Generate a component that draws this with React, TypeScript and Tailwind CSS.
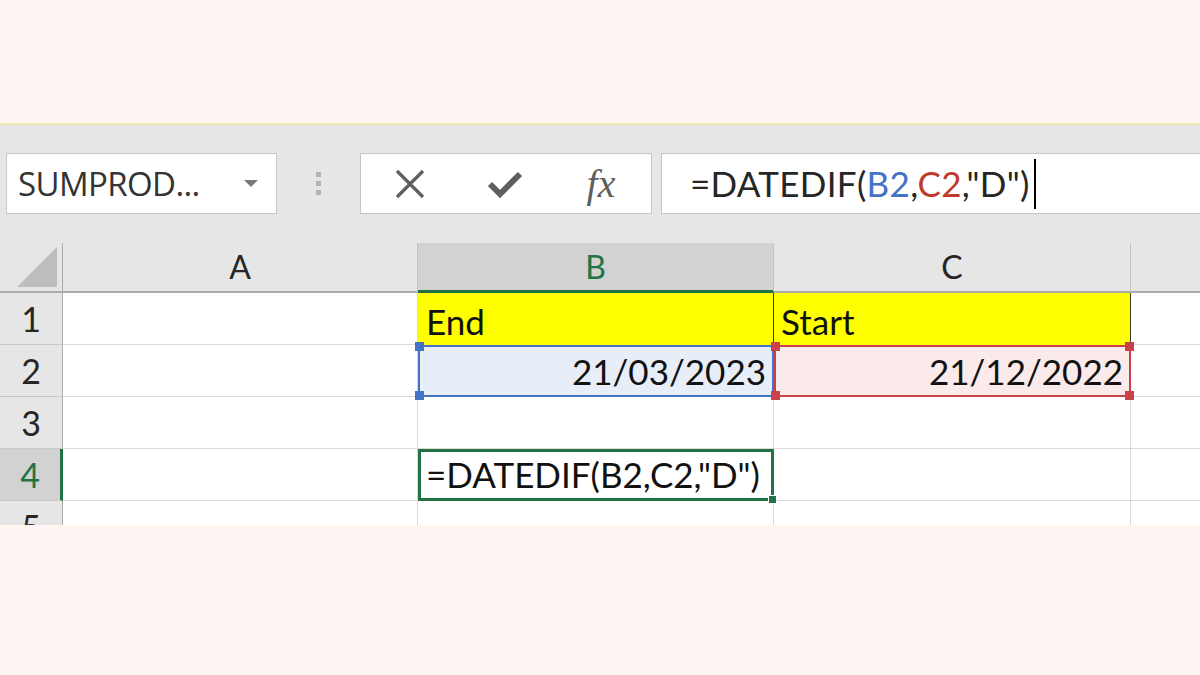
import React from "react"

const cellFont = { fontFamily: "Lato, 'Open Sans', sans-serif" }
const uiFont = { fontFamily: "'Open Sans', 'Noto Sans', sans-serif" }

function Handle({ pos, color }: { pos: string; color: string }) {
  return <div className={`absolute w-[9px] h-[9px] ${pos} ${color}`} />
}

function RowHead({ n, active }: { n: string; active?: boolean }) {
  return (
    <div
      className={`flex items-center justify-center border-b border-[#c9c9c9] text-[34px] ${
        active
          ? "bg-[#d2d2d2] text-[#217346] border-r-[3px] border-r-[#217346]"
          : "bg-[#e6e6e6] text-[#262626] border-r border-r-[#ababab]"
      }`}
    >
      <span className="leading-none">{n}</span>
    </div>
  )
}

export default function App() {
  return (
    <div className="w-[1200px] h-[675px] bg-[#fff5f2] flex flex-col overflow-hidden" style={cellFont}>
      <div className="h-[123px] shrink-0" />
      <div className="h-[2px] bg-[#ece9b4] shrink-0" />

      {/* excel */}
      <div className="h-[400px] shrink-0 bg-[#e6e6e6] flex flex-col overflow-hidden">
        {/* formula bar */}
        <div className="h-[118px] shrink-0 flex items-start pt-[28px] pl-[6px]">
          <div className="w-[271px] h-[61px] bg-white border border-[#c6c6c6] flex items-center pl-[11px] pr-[18px]">
            <span className="text-[33px] text-[#333] flex-1 tracking-[-0.6px] leading-none" style={uiFont}>
              SUMPROD...
            </span>
            <div className="w-0 h-0 border-l-[7px] border-r-[7px] border-t-[7px] border-l-transparent border-r-transparent border-t-[#7a7a7a]" />
          </div>
          <div className="w-[83px] h-[61px] flex flex-col items-center justify-center gap-[4px]">
            <div className="w-[5px] h-[5px] bg-[#b3b3b3]" />
            <div className="w-[5px] h-[5px] bg-[#b3b3b3]" />
            <div className="w-[5px] h-[5px] bg-[#b3b3b3]" />
          </div>
          <div className="w-[292px] h-[61px] bg-white border border-[#c6c6c6] flex items-center">
            <div className="w-[96px] flex justify-center pl-[2px]">
              <svg width="34" height="32" viewBox="0 0 34 32">
                <path d="M4 3 L30 29 M30 3 L4 29" stroke="#5f5f5f" strokeWidth="3.2" fill="none" />
              </svg>
            </div>
            <div className="w-[96px] flex justify-center">
              <svg width="36" height="30" viewBox="0 0 36 30">
                <path d="M3 15 L13 25 L33 5" stroke="#5f5f5f" strokeWidth="6" fill="none" strokeLinejoin="miter" />
              </svg>
            </div>
            <div className="w-[96px] flex justify-center">
              <span
                className="italic text-[40px] text-[#5f5f5f] leading-none"
                style={{ fontFamily: "'Liberation Serif', 'DejaVu Serif', serif" }}
              >
                fx
              </span>
            </div>
          </div>
          <div className="ml-[9px] flex-1 h-[61px] bg-white border border-[#c6c6c6] border-r-0 flex items-center pl-[28px]">
            <span className="text-[35px] text-[#262626] leading-none tracking-[0.3px]">
              =DATEDIF(<span className="text-[#4472c4]">B2</span>,<span className="text-[#c0392b]">C2</span>,"D")
            </span>
            <div className="w-[2px] h-[50px] bg-black ml-[4px]" />
          </div>
        </div>

        {/* grid */}
        <div className="grid grid-cols-[63px_355px_356px_357px_1fr] grid-rows-[50px_52px_52px_52px_52px_52px] bg-white">
          {/* header row */}
          <div className="bg-[#e6e6e6] border-r border-b-2 border-[#ababab] flex items-end justify-end pr-[5px] pb-[4px]">
            <svg width="40" height="40" viewBox="0 0 40 40">
              <polygon points="40,0 40,40 0,40" fill="#bdbdbd" />
            </svg>
          </div>
          <div className="bg-[#e6e6e6] border-r border-[#c4c4c4] border-b-2 border-b-[#ababab] flex items-center justify-center text-[32px] text-[#262626]">
            A
          </div>
          <div className="bg-[#d2d2d2] border-r border-[#c4c4c4] border-b-[3px] border-b-[#217346] flex items-center justify-center text-[32px] text-[#217346]">
            B
          </div>
          <div className="bg-[#e6e6e6] border-r border-[#c4c4c4] border-b-2 border-b-[#ababab] flex items-center justify-center text-[32px] text-[#262626]">
            C
          </div>
          <div className="bg-[#e6e6e6] border-b-2 border-b-[#ababab]" />

          {/* row 1 */}
          <RowHead n="1" />
          <div className="border-r border-b border-[#d9d9d9]" />
          <div className="bg-[#ffff00] border-r border-[#2f3a22] flex items-end pl-[8px] pb-[6px] text-[35px] text-[#111] leading-none">
            End
          </div>
          <div className="bg-[#ffff00] border-r border-[#3a3a22] flex items-end pl-[7px] pb-[6px] text-[35px] text-[#111] leading-none">
            Start
          </div>
          <div className="border-b border-[#d9d9d9]" />

          {/* row 2 */}
          <RowHead n="2" />
          <div className="border-r border-b border-[#d9d9d9]" />
          <div className="relative bg-[#e8eef8] border-2 border-[#4472c4] flex items-end justify-end pr-[6px] pb-[6px] text-[35px] text-[#111] leading-none">
            21/03/2023
            <Handle pos="-left-[5px] -top-[5px]" color="bg-[#4472c4]" />
            <Handle pos="-left-[5px] -bottom-[5px]" color="bg-[#4472c4]" />
          </div>
          <div className="relative bg-[#fbeaea] border-2 border-[#c8414b] flex items-end justify-end pr-[6px] pb-[6px] text-[35px] text-[#111] leading-none">
            21/12/2022
            <Handle pos="-left-[5px] -top-[5px]" color="bg-[#c8414b]" />
            <Handle pos="-left-[5px] -bottom-[5px]" color="bg-[#c8414b]" />
            <Handle pos="-right-[5px] -top-[5px]" color="bg-[#c8414b]" />
            <Handle pos="-right-[5px] -bottom-[5px]" color="bg-[#c8414b]" />
          </div>
          <div className="border-b border-[#d9d9d9]" />

          {/* row 3 */}
          <RowHead n="3" />
          <div className="border-r border-b border-[#d9d9d9]" />
          <div className="border-r border-b border-[#d9d9d9]" />
          <div className="border-r border-b border-[#d9d9d9]" />
          <div className="border-b border-[#d9d9d9]" />

          {/* row 4 */}
          <RowHead n="4" active />
          <div className="border-r border-b border-[#d9d9d9]" />
          <div className="relative border-[3px] border-[#217346] flex items-end pl-[5px] pb-[6px] text-[35px] text-[#111] leading-none whitespace-nowrap">
            =DATEDIF(B2,C2,"D")
            <div className="absolute -right-[6px] -bottom-[6px] w-[9px] h-[9px] bg-[#217346] border border-white" />
          </div>
          <div className="border-r border-b border-[#d9d9d9]" />
          <div className="border-b border-[#d9d9d9]" />

          {/* row 5 */}
          <RowHead n="5" />
          <div className="border-r border-[#d9d9d9]" />
          <div className="border-r border-[#d9d9d9]" />
          <div className="border-r border-[#d9d9d9]" />
          <div />
        </div>
      </div>
    </div>
  )
}
